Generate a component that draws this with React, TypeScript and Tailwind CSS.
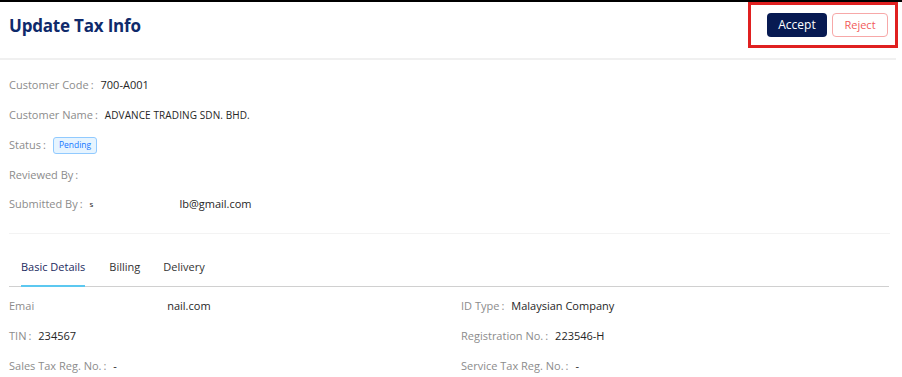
import React from "react";

const F = { fontFamily: '"Open Sans", "Noto Sans", sans-serif' };

function Row({ label, children }: { label: string; children?: React.ReactNode }) {
  return (
    <div className="flex items-center h-[30px] text-[11px]">
      <span className="text-[#8c8c8c]">{label}</span>
      <span className="text-[#8c8c8c] ml-[2px]">:</span>
      <span className="text-[#262626] ml-[7px] flex items-center">{children}</span>
    </div>
  );
}

export default function App() {
  return (
    <div className="w-full bg-white border-t-[2px] border-black" style={F}>
      <div className="flex items-start justify-between h-[56px] pl-[9px]">
        <h1 className="mt-[14px] text-[17px] font-bold text-[#0f2a6b] leading-[20px] tracking-[-0.2px]">Update Tax Info</h1>
        <div className="flex items-center gap-[5px] border-[3px] border-[#e02020] h-[46px] pl-[16px] pr-[7px] mr-[4px]">
          <button className="h-[24px] w-[60px] rounded-[4px] bg-[#071a52] text-white text-[12px] font-medium">Accept</button>
          <button className="h-[24px] w-[56px] rounded-[4px] border border-[#f7a8a8] bg-white text-[#f25a5a] text-[11px]">Reject</button>
        </div>
      </div>
      <div className="h-[2px] bg-[#f0f0f0] mr-[6px]"></div>
      <div className="pt-[10px] pb-[14px] px-[9px]">
        <Row label="Customer Code">700-A001</Row>
        <Row label="Customer Name"><span className="text-[10px] tracking-[0.1px]">ADVANCE TRADING SDN. BHD.</span></Row>
        <Row label="Status">
          <span className="inline-flex items-center h-[17px] px-[5px] rounded-[3px] border border-[#91caff] bg-[#e6f4ff] text-[#1677ff] text-[8.5px]">Pending</span>
        </Row>
        <Row label="Reviewed By"></Row>
        <div className="flex items-center h-[30px] text-[11px] -mt-[1px]">
          <span className="text-[#8c8c8c]">Submitted By</span>
          <span className="text-[#8c8c8c] ml-[2px]">:</span>
          <span className="text-[#262626] ml-[7px] text-[8px]">s</span>
          <span className="text-[#262626] ml-[86px]">lb@gmail.com</span>
        </div>
      </div>
      <div className="h-px bg-[#f3f3f3] mx-[9px] mr-[12px]"></div>
      <div className="mx-[9px] mr-[13px] mt-[25px] flex border-b border-[#d0d0d0] h-[28px] text-[11px]">
        <div className="ml-[12px] relative flex items-start text-[#1b2a5e] font-medium">
          Basic Details
          <span className="absolute left-0 right-0 bottom-[-1px] h-[2px] bg-[#5cc8f0]"></span>
        </div>
        <div className="ml-[24px] text-[#333]">Billing</div>
        <div className="ml-[23px] text-[#333]">Delivery</div>
      </div>
      <div className="grid grid-cols-[452px_1fr] px-[9px] pt-[4px]">
        <div>
          <div className="flex items-center h-[30px] text-[11px]">
            <span className="text-[#8c8c8c]">Emai</span>
            <span className="text-[#262626] ml-[133px]">nail.com</span>
          </div>
          <Row label="TIN">234567</Row>
          <Row label="Sales Tax Reg. No.">-</Row>
        </div>
        <div>
          <Row label="ID Type">Malaysian Company</Row>
          <Row label="Registration No.">223546-H</Row>
          <Row label="Service Tax Reg. No.">-</Row>
        </div>
      </div>
    </div>
  );
}
